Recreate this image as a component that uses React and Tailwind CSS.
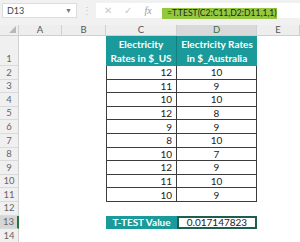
import React from "react";

const C = [12, 11, 10, 12, 9, 8, 10, 12, 11, 10];
const D = [10, 9, 10, 8, 9, 10, 7, 9, 10, 9];

function RowHead({ n, sel, bottom }) {
  return (
    <div
      className={
        "flex justify-center border-b border-[#dadada] text-[9.5px] leading-none text-[#666] " +
        (bottom ? "items-end pb-[2px] " : "items-center ") +
        (sel ? "bg-[#d6d6d6] border-r-2 border-r-[#217346] text-[#3a6e4f]" : "bg-[#f0f0f0] border-r border-r-[#d0d0d0]")
      }
    >
      {n}
    </div>
  );
}

export default function App() {
  const font = { fontFamily: "Lato, 'Open Sans', sans-serif" };
  return (
    <div className="w-[300px] h-[242px] overflow-hidden bg-white" style={font}>
      {/* formula bar */}
      <div className="h-[25px] bg-[#f1f1f1] flex items-start pt-[3px] pl-[2px]">
        <div className="w-[75px] h-[15px] bg-white border border-[#dcdcdc] flex items-center justify-between pl-[4px] pr-[4px]">
          <span className="text-[9px] text-[#444]">D13</span>
          <span className="text-[7px] text-[#777]">▼</span>
        </div>
        <div className="w-[19px] h-[15px] flex items-center justify-center text-[10px] text-[#c4c4c4]">⋮</div>
        <div className="flex-1 h-[15px] bg-white flex items-center">
          <span className="w-[20px] text-center text-[10px] text-[#c8c8c8] ml-[2px]">✕</span>
          <span className="w-[20px] text-center text-[10px] text-[#c8c8c8]">✓</span>
          <span className="w-[20px] text-center text-[10px] italic text-[#999]" style={{ fontFamily: "'Liberation Serif', serif" }}>fx</span>
          <div className="ml-[4px] mt-[5px] h-[11px] w-[115px] bg-[#94c83f] flex items-center pl-[5px] text-[8.6px] text-[#1f1f1f] leading-none whitespace-nowrap overflow-hidden">
            =T.TEST(C2:C11,D2:D11,1,1)
          </div>
        </div>
      </div>

      {/* grid */}
      <div className="grid grid-cols-[19px_43px_44px_71px_80px_43px] grid-rows-[11px_30px_repeat(13,13.6px)]">
        {/* column headers */}
        <div className="bg-[#eeeeee] border-r border-b border-[#d0d0d0] relative">
          <div className="absolute right-[2px] bottom-[2px] w-0 h-0 border-l-[7px] border-l-transparent border-b-[7px] border-b-[#b7b7b7]" />
        </div>
        {["A", "B", "C", "D", "E"].map((l) => (
          <div
            key={l}
            className={
              "flex items-center justify-center text-[9.5px] leading-none border-r border-b border-[#d0d0d0] " +
              (l === "D" ? "bg-[#d9d9d9] text-[#3a6e4f]" : "bg-[#eeeeee] text-[#555]")
            }
          >
            {l}
          </div>
        ))}

        {/* row 1 */}
        <RowHead n={1} bottom />
        <div />
        <div />
        <div className="bg-[#1a9a9a] text-white font-bold text-[10px] leading-[14px] flex flex-col items-center justify-center border-r border-[#128080]">
          <span>Electricity</span>
          <span>Rates in $_US</span>
        </div>
        <div className="bg-[#1a9a9a] text-white font-bold text-[10px] leading-[14px] flex flex-col items-center justify-center">
          <span>Electricity Rates</span>
          <span>in $_Australia</span>
        </div>
        <div />

        {C.map((c, i) => (
          <React.Fragment key={i}>
            <RowHead n={i + 2} />
            <div />
            <div />
            <div className="border-l border-r border-b border-[#3c3c3c] flex items-center justify-end pr-[4px] text-[10px] text-[#222] leading-none">
              {c}
            </div>
            <div className="border-r border-b border-[#3c3c3c] flex items-center justify-center text-[10px] text-[#222] leading-none">
              {D[i]}
            </div>
            <div />
          </React.Fragment>
        ))}

        {/* row 12 */}
        <RowHead n={12} />
        <div />
        <div />
        <div />
        <div />
        <div />

        {/* row 13 */}
        <RowHead n={13} sel />
        <div />
        <div />
        <div className="bg-[#1a9a9a] text-white font-bold text-[10px] leading-none flex items-center justify-center my-[0.5px]">
          T-TEST Value
        </div>
        <div className="border-2 border-[#1d5e4e] flex items-center justify-center text-[10px] text-[#222] leading-none">
          0.017147823
        </div>
        <div />

        {/* row 14 */}
        <RowHead n={14} />
        <div />
        <div />
        <div />
        <div />
        <div />
      </div>
    </div>
  );
}
